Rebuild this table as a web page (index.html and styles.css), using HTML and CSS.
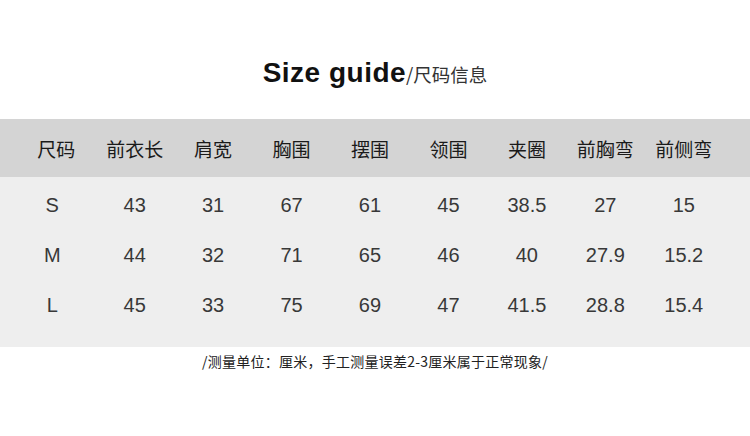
FILE: index.html
```html
<!DOCTYPE html>
<html lang="zh-CN">
<head>
<meta charset="utf-8">
<title>Size guide</title>
<link rel="stylesheet" href="styles.css">
</head>
<body>
<div class="page">
  <h1 class="title"><span class="title-en">Size guide</span><span class="title-cn">/尺码信息</span></h1>
  <div class="table">
    <div class="row head">
      <div class="cell">尺码</div>
      <div class="cell">前衣长</div>
      <div class="cell">肩宽</div>
      <div class="cell">胸围</div>
      <div class="cell">摆围</div>
      <div class="cell">领围</div>
      <div class="cell">夹圈</div>
      <div class="cell">前胸弯</div>
      <div class="cell">前侧弯</div>
    </div>
    <div class="body">
      <div class="row data">
        <div class="cell size">S</div>
        <div class="cell">43</div>
        <div class="cell">31</div>
        <div class="cell">67</div>
        <div class="cell">61</div>
        <div class="cell">45</div>
        <div class="cell">38.5</div>
        <div class="cell">27</div>
        <div class="cell">15</div>
      </div>
      <div class="row data">
        <div class="cell size">M</div>
        <div class="cell">44</div>
        <div class="cell">32</div>
        <div class="cell">71</div>
        <div class="cell">65</div>
        <div class="cell">46</div>
        <div class="cell">40</div>
        <div class="cell">27.9</div>
        <div class="cell">15.2</div>
      </div>
      <div class="row data">
        <div class="cell size">L</div>
        <div class="cell">45</div>
        <div class="cell">33</div>
        <div class="cell">75</div>
        <div class="cell">69</div>
        <div class="cell">47</div>
        <div class="cell">41.5</div>
        <div class="cell">28.8</div>
        <div class="cell">15.4</div>
      </div>
    </div>
  </div>
  <p class="note">/测量单位：厘米，手工测量误差2-3厘米属于正常现象/</p>
</div>
</body>
</html>
```

FILE: styles.css
```css
html, body {
  margin: 0;
  padding: 0;
  background: #ffffff;
}

.page {
  width: 750px;
  height: 436px;
  overflow: hidden;
  font-family: "Liberation Sans", "Noto Sans CJK SC", sans-serif;
  color: #222;
}

.title {
  margin: 0;
  padding-top: 59px;
  height: 28px;
  margin-bottom: 32px;
  display: flex;
  justify-content: center;
  align-items: baseline;
  line-height: 28px;
}

.title-en {
  font-family: "Liberation Sans", sans-serif;
  font-weight: 700;
  font-size: 28px;
  letter-spacing: 0.5px;
  color: #111;
}

.title-cn {
  font-family: "Noto Sans CJK SC", sans-serif;
  font-weight: 400;
  font-size: 18.5px;
  color: #333;
}

.row {
  display: grid;
  grid-template-columns: repeat(9, 1fr);
  padding: 0 27px 0 17px;
  align-items: center;
}

.cell {
  text-align: center;
  white-space: nowrap;
}

.head {
  height: 58px;
  background: #d4d4d4;
  font-family: "Noto Sans CJK SC", sans-serif;
  font-size: 19px;
  color: #1a1a1a;
}

.body {
  background: #eeeeee;
  height: 170px;
  padding-top: 3px;
  box-sizing: border-box;
}

.data {
  height: 50px;
  font-family: "Liberation Sans", "Noto Sans CJK SC", sans-serif;
  font-size: 20px;
  color: #383838;
}

.data .size {
  padding-right: 8px;
}

.note {
  margin: 4px 0 0;
  line-height: 20px;
  text-align: center;
  font-family: "Noto Sans CJK SC", sans-serif;
  font-size: 14px;
  letter-spacing: 0.25px;
  color: #222;
}
```
